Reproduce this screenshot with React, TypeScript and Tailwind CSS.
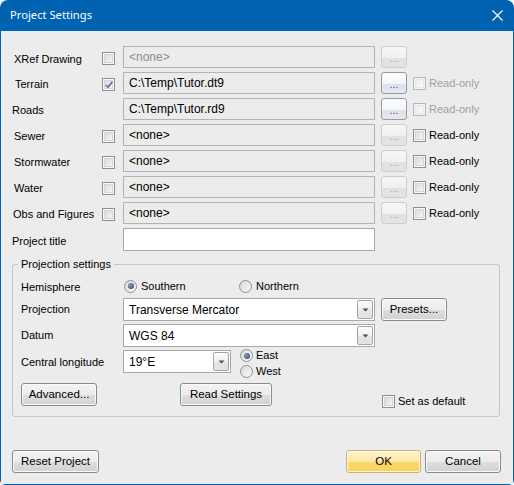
import React from "react";

const F = "font-['Liberation_Sans',Arial,sans-serif]";

function CheckBox({ checked = false, disabled = false }: { checked?: boolean; disabled?: boolean }) {
  return (
    <span
      className={
        "relative flex h-[13px] w-[13px] shrink-0 items-center justify-center border " +
        (disabled ? "border-[#b8b8b8] bg-[#f4f4f4]" : "border-[#8e8f8f] bg-[#f7f7f7]")
      }
    >
      <span
        className={
          "block h-[9px] w-[9px] border " +
          (disabled
            ? "border-[#e6e6e6] bg-[linear-gradient(135deg,#ececec,#fafafa)]"
            : "border-[#d6d6d6] bg-[linear-gradient(135deg,#d9d9d9,#f6f6f6)]")
        }
      />
      {checked && (
        <svg className="absolute left-[1px] top-[1px]" width="10" height="10" viewBox="0 0 10 10">
          <path d="M1.8 5 L4 7.3 L8.3 1.8" fill="none" stroke="#5a6f9e" strokeWidth="1.7" />
        </svg>
      )}
    </span>
  );
}

function Radio({ checked = false }: { checked?: boolean }) {
  return (
    <span className="flex h-[13px] w-[13px] shrink-0 items-center justify-center rounded-full border border-[#8e8f8f] bg-[linear-gradient(135deg,#d8d8d8,#fbfbfb)]">
      {checked && (
        <span className="block h-[6px] w-[6px] rounded-full bg-[radial-gradient(circle_at_35%_35%,#8a9bb5,#2c3e63)]" />
      )}
    </span>
  );
}

function DotsButton({ enabled }: { enabled: boolean }) {
  return (
    <div
      className={
        "flex h-[22px] w-[26px] shrink-0 items-end justify-center rounded-[3px] border pb-[3px] text-[10px] leading-[10px] " +
        (enabled
          ? "border-[#8f9bab] bg-[linear-gradient(to_bottom,#fdfdfe_0%,#f3f5f8_55%,#dce2e9_56%,#e6eaef_100%)] text-[#8a0f8a]"
          : "border-[#cdcdcd] bg-[linear-gradient(to_bottom,#f6f6f6_0%,#f0f0f0_55%,#e1e1e1_56%,#e4e4e4_100%)] text-[#a5a5a5]")
      }
    >
      ...
    </div>
  );
}

function Btn({ children, cls }: { children: React.ReactNode; cls: string }) {
  return (
    <div
      className={
        "flex h-[23px] shrink-0 items-center justify-center rounded-[3px] border border-[#8a8a8a] bg-[linear-gradient(to_bottom,#f3f3f3_0%,#ececec_50%,#dedede_51%,#d2d2d2_100%)] text-[11.5px] leading-[13px] text-black shadow-[inset_0_0_0_1px_#fafafa] " +
        cls
      }
    >
      {children}
    </div>
  );
}

function Arrow() {
  return (
    <svg width="7" height="4" viewBox="0 0 7 4">
      <path d="M0.5 0.5 H6.5 L3.5 3.5 Z" fill="#4d4d4d" />
    </svg>
  );
}

function Combo({ value, cls }: { value: string; cls: string }) {
  return (
    <div className={"flex h-[23px] shrink-0 items-center border border-[#a9a9a9] bg-white pl-[5px] pr-[1px] " + cls}>
      <span className="flex-1 text-[12px] leading-[14px] text-black">{value}</span>
      <span className="flex h-[19px] w-[16px] items-center justify-center rounded-[2px] border border-[#a5a5a5] bg-[linear-gradient(to_bottom,#fbfbfb_0%,#f0f0f0_50%,#e2e4e8_51%,#dfe2e6_100%)]">
        <Arrow />
      </span>
    </div>
  );
}

type Row = {
  label: string;
  lcls: string;
  cb: "none" | "off" | "on";
  value: string;
  gray?: boolean;
  btn: boolean;
  ro: "none" | "dis" | "en";
};

const rows: Row[] = [
  { label: "XRef Drawing", lcls: "pl-[13px] pt-[5px]", cb: "off", value: "<none>", gray: true, btn: false, ro: "none" },
  { label: "Terrain", lcls: "pl-[14px] pt-[2px]", cb: "on", value: "C:\\Temp\\Tutor.dt9", btn: true, ro: "dis" },
  { label: "Roads", lcls: "pl-[11px] pt-[2px]", cb: "none", value: "C:\\Temp\\Tutor.rd9", btn: true, ro: "dis" },
  { label: "Sewer", lcls: "pl-[13px] pt-[3px]", cb: "off", value: "<none>", btn: false, ro: "en" },
  { label: "Stormwater", lcls: "pl-[13px] pt-[3px]", cb: "off", value: "<none>", btn: false, ro: "en" },
  { label: "Water", lcls: "pl-[13px] pt-[3px]", cb: "off", value: "<none>", btn: false, ro: "en" },
  { label: "Obs and Figures", lcls: "pl-[12px] pt-[3px]", cb: "off", value: "<none>", btn: false, ro: "en" },
];

export default function App() {
  return (
    <div className={"h-[485px] w-[514px] bg-white " + F}>
      <div className="flex h-full w-full flex-col overflow-hidden rounded-t-[8px] rounded-b-[5px] bg-[#0063b1] px-[1px] pb-[1px]">
        {/* Title bar */}
        <div className="flex h-[31px] shrink-0 items-center justify-between pl-[9px] pr-[10px]">
          <span className="font-['Noto_Sans',sans-serif] text-[11.2px] text-white">Project Settings</span>
          <svg width="11" height="11" viewBox="0 0 11 11">
            <path d="M0.5 0.5 L10.5 10.5 M10.5 0.5 L0.5 10.5" stroke="white" strokeWidth="1.1" />
          </svg>
        </div>

        {/* Body */}
        <div className="flex flex-1 flex-col bg-[#ececec] pt-[15px] text-[11px] leading-[13px] text-black">
          <div className="flex flex-col gap-[4px]">
            {rows.map((r) => (
              <div key={r.label} className="flex h-[22px] items-center">
                <div className={"w-[101px] shrink-0 " + r.lcls}>{r.label}</div>
                <div className="flex w-[13px] shrink-0 items-center pt-[3px]">
                  {r.cb === "off" && <CheckBox />}
                  {r.cb === "on" && <CheckBox checked />}
                </div>
                <div
                  className={
                    "ml-[8px] flex h-[22px] w-[252px] shrink-0 items-center border border-[#b3b3b3] bg-[#ececec] pl-[5px] text-[12px] leading-[14px] " +
                    (r.gray ? "text-[#8c8c8c]" : "text-black")
                  }
                >
                  {r.value}
                </div>
                <div className="ml-[6px]">
                  <DotsButton enabled={r.btn} />
                </div>
                {r.ro !== "none" && (
                  <div className="ml-[6px] flex items-center gap-[3px]">
                    <CheckBox disabled={r.ro === "dis"} />
                    <span className={r.ro === "dis" ? "text-[#a0a0a0]" : "text-black"}>Read-only</span>
                  </div>
                )}
              </div>
            ))}
            <div className="flex h-[23px] items-center">
              <div className="w-[122px] shrink-0 pl-[11px] pt-[3px]">Project title</div>
              <div className="h-[23px] w-[252px] shrink-0 border border-[#a9a9a9] bg-white" />
            </div>
          </div>

          {/* Projection settings group */}
          <div className="relative ml-[11px] mt-[13px] w-[488px] rounded-[3px] border border-[#c5c5c5] pl-[8px] pt-[13px] pb-[8px]">
            <span className="absolute -top-[7px] left-[5px] bg-[#ececec] px-[3px]">Projection settings</span>

            <div className="flex h-[16px] items-center">
              <div className="w-[103px] shrink-0 pt-[2px]">Hemisphere</div>
              <div className="flex w-[115px] items-center gap-[4px]">
                <Radio checked />
                <span>Southern</span>
              </div>
              <div className="flex items-center gap-[4px]">
                <Radio />
                <span>Northern</span>
              </div>
            </div>

            <div className="mt-[4px] flex h-[23px] items-center">
              <div className="w-[102px] shrink-0">Projection</div>
              <Combo value="Transverse Mercator" cls="w-[252px]" />
              <Btn cls="ml-[6px] w-[66px]">Presets...</Btn>
            </div>

            <div className="mt-[3px] flex h-[23px] items-center">
              <div className="w-[102px] shrink-0">Datum</div>
              <Combo value="WGS 84" cls="w-[252px]" />
            </div>

            <div className="mt-[3px] flex h-[23px] items-center">
              <div className="w-[102px] shrink-0 pt-[2px]">Central longitude</div>
              <Combo value="19°E" cls="w-[108px]" />
              <div className="ml-[9px] mt-[4px] flex flex-col gap-[3px]">
                <div className="flex items-center gap-[3px]">
                  <Radio checked />
                  <span>East</span>
                </div>
                <div className="flex items-center gap-[3px]">
                  <Radio />
                  <span>West</span>
                </div>
              </div>
            </div>

            <div className="mt-[10px] flex items-start">
              <Btn cls="w-[76px]">Advanced...</Btn>
              <Btn cls="ml-[83px] w-[92px]">Read Settings</Btn>
              <div className="ml-[110px] mt-[12px] flex items-center gap-[3px]">
                <CheckBox />
                <span>Set as default</span>
              </div>
            </div>
          </div>

          <div className="flex-1" />

          {/* Bottom buttons */}
          <div className="flex items-center pb-[11px] pl-[11px]">
            <Btn cls="w-[87px]">Reset Project</Btn>
            <div className="flex-1" />
            <div className="flex h-[23px] w-[75px] items-center justify-center rounded-[3px] border border-[#cfb26f] bg-[linear-gradient(to_bottom,#fdf4d3_0%,#fce9a6_50%,#f9da6e_51%,#f8d35a_100%)] text-[11.5px] shadow-[inset_0_0_0_1px_#fff8e0]">
              OK
            </div>
            <Btn cls="ml-[4px] mr-[12px] w-[76px]">Cancel</Btn>
          </div>
        </div>
      </div>
    </div>
  );
}
